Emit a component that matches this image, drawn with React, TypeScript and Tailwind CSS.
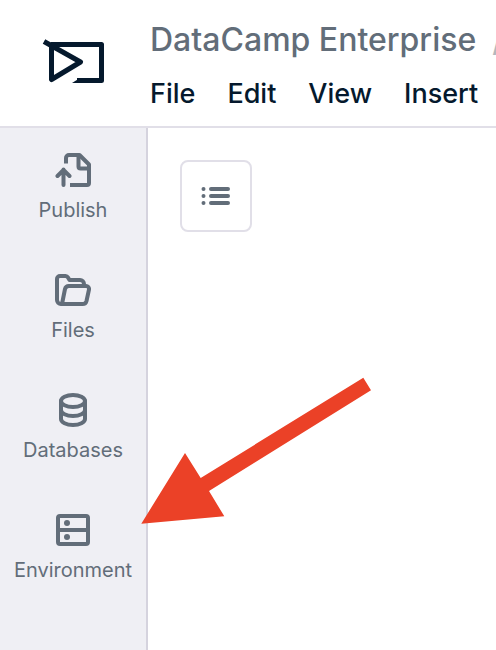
import type { ReactNode } from "react";

const menus = ["File", "Edit", "View", "Insert"];

function Icon({ children }: { children: ReactNode }) {
  return (
    <svg
      viewBox="0 0 36 36"
      className="size-9 shrink-0"
      fill="none"
      stroke="currentColor"
      strokeWidth="4"
      strokeLinecap="round"
      strokeLinejoin="round"
      aria-hidden="true"
    >
      {children}
    </svg>
  );
}

const tools = [
  {
    label: "Publish",
    icon: (
      <Icon>
        <path strokeLinecap="butt" d="M11 11.5V6a3 3 0 0 1 3-3h10.500L34 12.500V31a2 2 0 0 1-2 2H15" />
        <path d="M23.500 4v10.500a2 2 0 0 0 2 2H33" />
        <path d="M8.500 33V17.500M2.500 24l6-6 6 6" />
      </Icon>
    ),
  },
  {
    label: "Files",
    icon: (
      <Icon>
        <path d="M7 32H6a4 4 0 0 1-4-4V7a3 3 0 0 1 3-3h5.500a3 3 0 0 1 2.500 1.500L14.500 8H25a4 4 0 0 1 4 4v1" />
        <path d="M7 32l3-15a4 4 0 0 1 4-3H31a3 3 0 0 1 3 3.500l-2.500 11.500a4 4 0 0 1-4 3z" />
      </Icon>
    ),
  },
  {
    label: "Databases",
    icon: (
      <Icon>
        <ellipse cx="18" cy="9" rx="12" ry="6" />
        <path d="M6 9v18c0 3.300 5.400 6 12 6s12-2.700 12-6V9" />
        <path d="M6 18c0 3.300 5.400 6 12 6s12-2.700 12-6" />
      </Icon>
    ),
  },
  {
    label: "Environment",
    icon: (
      <Icon>
        <rect x="3" y="4" width="30" height="28" rx="2" />
        <path d="M3 18h30" />
        <circle cx="12" cy="11" r="3" fill="currentColor" stroke="none" />
        <circle cx="12" cy="25" r="3" fill="currentColor" stroke="none" />
      </Icon>
    ),
  },
];

function Logo() {
  return (
    <svg viewBox="0 0 64 48" className="h-12 w-16" fill="none" stroke="#05192d" strokeWidth="5" strokeLinejoin="round" role="img" aria-label="DataCamp Workspace">
      <path d="M4 5.500L40.500 26L11.500 43.500V8.500H61.500V44.500H37" />
      <path d="M32 47l8-5h4v5z" fill="#05192d" stroke="none" />
    </svg>
  );
}

export default function App() {
  return (
    <div className="flex min-h-screen flex-col overflow-hidden bg-white font-['Inter','Liberation_Sans',sans-serif] text-[#05192d]">
      <header className="flex h-32 shrink-0 border-b-2 border-[#e1dfe8]">
        <a href="#home" className="ml-10 mt-9 w-27.5 shrink-0">
          <Logo />
        </a>
        <div className="min-w-0 flex-1 overflow-hidden pt-5">
          <div className="flex h-10 items-center gap-4 whitespace-nowrap text-[32px] font-medium leading-10">
            <a href="#group" className="text-[#626d79]">DataCamp Enterprise</a>
            <span className="text-[#b4b8be]">/</span>
          </div>
          <nav className="mt-3 flex gap-8 text-[27px] font-medium leading-11">
            {menus.map((m) => (
              <button key={m} type="button">{m}</button>
            ))}
          </nav>
        </div>
      </header>
      <div className="relative flex flex-1">
        <aside className="flex w-37 shrink-0 flex-col gap-12 border-r-2 border-[#d5d3de] bg-[#efeff4] pt-6 text-[#626d79]">
          {tools.map((t) => (
            <button key={t.label} type="button" className="flex flex-col items-center gap-2 text-[20px] leading-7">
              {t.icon}
              {t.label}
            </button>
          ))}
        </aside>
        <main className="flex-1 p-8">
          <button type="button" aria-label="Outline" className="flex size-18 items-center justify-center rounded-lg border-2 border-[#e1dfe8] text-[#626d79]">
            <Icon>
              <path d="M13 11h17M13 18h17M13 25h17M5.500 11h.01M5.500 18h.01M5.500 25h.01" />
            </Icon>
          </button>
        </main>
        <svg viewBox="0 0 232 148" className="pointer-events-none absolute left-35 top-62 h-37 w-58" fill="#eb4127" aria-hidden="true">
          <path d="M1.300 147.700L45 77l15.700 25L223.300 1.700L231 14.300L69 115l15.300 25.300z" />
        </svg>
      </div>
    </div>
  );
}
